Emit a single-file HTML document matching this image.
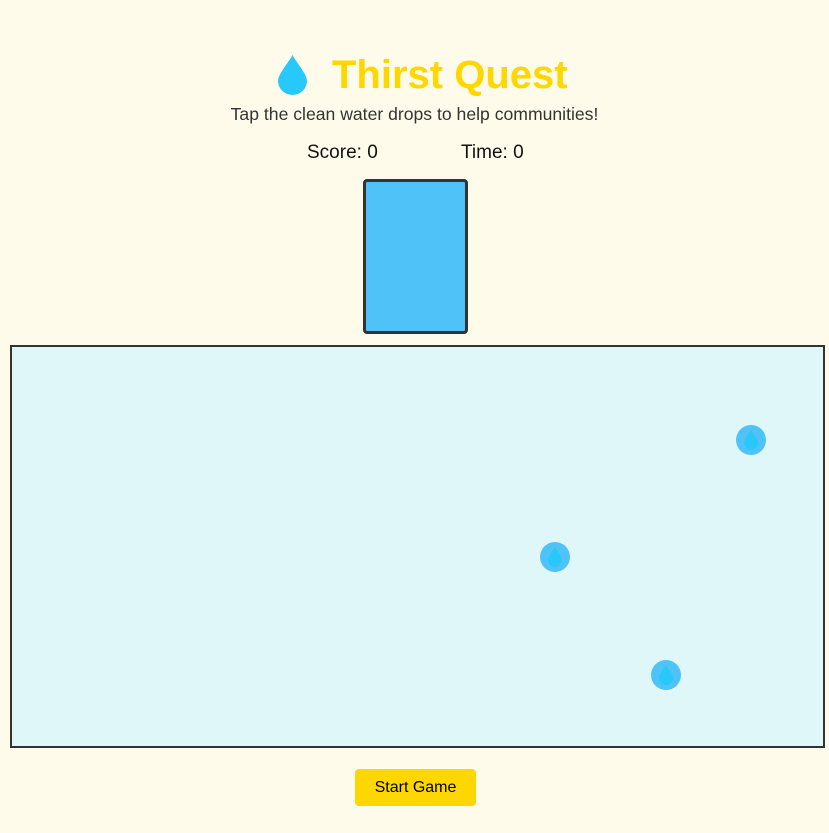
<!DOCTYPE html>
<html><head><meta charset="utf-8"><style>
body{margin:0;width:829px;height:833px;background:#fffbea;font-family:"Liberation Sans",sans-serif;position:relative;overflow:hidden}
.a{position:absolute}
h1{position:absolute;margin:0;left:332px;top:52px;font-size:40px;font-weight:bold;color:#ffd700;line-height:46px;white-space:nowrap}
.sub{left:0;width:829px;text-align:center;top:103px;font-size:17.6px;color:#333;line-height:22px}
.st{top:142px;font-size:19px;color:#111;line-height:22px}
.jug{left:363px;top:179px;width:99px;height:149px;border:3px solid #333;border-radius:4px;background:#4fc3f7}
.game{left:10px;top:345px;width:811px;height:399px;border:2px solid #333;background:#e0f7fa}
.d{width:30px;height:30px;border-radius:50%;background:#4fc3f7}
.d svg{position:absolute;left:8px;top:5px}
.btn{left:355px;top:769px;width:121px;height:37px;background:#ffd700;border-radius:4px;text-align:center;line-height:37px;font-size:16px;color:#000}
</style></head><body>
<svg class="a" style="left:277px;top:54px" width="31" height="41" viewBox="0 0 31 41"><path d="M15.5 1 C12 8 1 20 1 27 A14.5 14 0 0 0 30 27 C30 20 19 8 15.5 1Z" fill="#29c8fb"/></svg>
<h1>Thirst Quest</h1>
<div class="a sub">Tap the clean water drops to help communities!</div>
<div class="a st" style="left:307px">Score: 0</div>
<div class="a st" style="left:461px">Time: 0</div>
<div class="a jug"></div>
<div class="a game"></div>
<div class="a d" style="left:736px;top:425px"><svg width="14" height="20" viewBox="0 0 14 20"><path d="M7 0C5 4 0 9 0 13A7 7 0 0 0 14 13C14 9 9 4 7 0Z" fill="#29c8fb"/></svg></div>
<div class="a d" style="left:540px;top:542px"><svg width="14" height="20" viewBox="0 0 14 20"><path d="M7 0C5 4 0 9 0 13A7 7 0 0 0 14 13C14 9 9 4 7 0Z" fill="#29c8fb"/></svg></div>
<div class="a d" style="left:651px;top:660px"><svg width="14" height="20" viewBox="0 0 14 20"><path d="M7 0C5 4 0 9 0 13A7 7 0 0 0 14 13C14 9 9 4 7 0Z" fill="#29c8fb"/></svg></div>
<div class="a btn">Start Game</div>
</body></html>
